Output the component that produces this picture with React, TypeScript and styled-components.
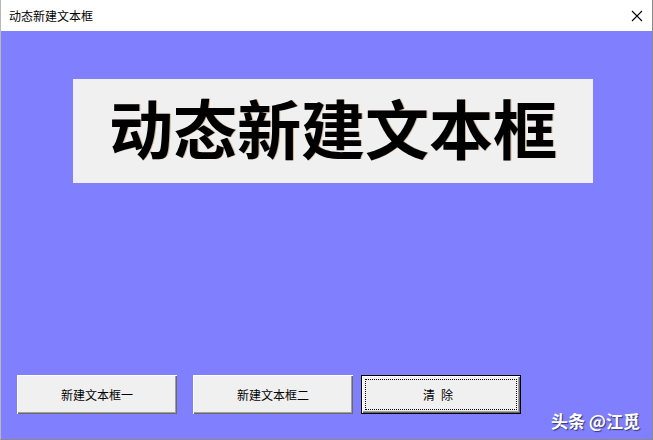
import React from "react";
import styled, { createGlobalStyle } from "styled-components";

const GlobalStyle = createGlobalStyle`
    html, body {
        margin: 0;
        padding: 0;
        background: #ffffff;
    }
    body {
        font-family: "Noto Sans CJK SC", "Liberation Sans", sans-serif;
    }
`;

const Window = styled.div`
    position: relative;
    width: 653px;
    height: 440px;
    box-sizing: border-box;
    display: flex;
    flex-direction: column;
    border-right: 1px solid #8a8a8a;
    border-bottom: 1px solid #8a8a8a;
    border-left: 1px solid #b8b8b8;
    overflow: hidden;
`;

const TitleBar = styled.div`
    height: 31px;
    flex: none;
    display: flex;
    align-items: center;
    justify-content: space-between;
    background: #ffffff;
    padding: 0 0 0 8px;
`;

const Title = styled.span`
    font-size: 12px;
    color: #000;
    line-height: 1;
`;

const CloseButton = styled.div`
    width: 30px;
    height: 31px;
    display: flex;
    align-items: center;
    justify-content: center;
`;

const Body = styled.div`
    flex: 1;
    background: #8080ff;
    display: flex;
    flex-direction: column;
    padding: 48px 0 0 0;
`;

const Banner = styled.div`
    margin-left: 72px;
    width: 520px;
    height: 104px;
    background: #f0f0f0;
    display: flex;
    align-items: center;
    justify-content: center;
`;

const BannerText = styled.span`
    font-size: 64px;
    font-weight: 700;
    color: #000;
    line-height: 1;
    margin-top: -10px;
    text-shadow: 1px 0 0 rgba(140, 70, 0, 0.35);
`;

const ButtonRow = styled.div`
    margin-top: auto;
    margin-bottom: 25px;
    padding-left: 16px;
    display: flex;
    gap: 8px;
`;

const Button = styled.button<{ $focused?: boolean; $gapAfter?: number }>`
    box-sizing: border-box;
    width: 160px;
    height: 39px;
    margin-right: ${(p) => p.$gapAfter ?? 0}px;
    background: #f0f0f0;
    font-family: "Noto Sans CJK SC", "Liberation Sans", sans-serif;
    font-size: 12px;
    color: #000;
    padding: 0;
    position: relative;
    border: ${(p) => (p.$focused ? "1px solid #000" : "none")};
    box-shadow: inset 1px 1px 0 #ffffff, inset -1px -1px 0 #696969, inset -2px -2px 0 #a0a0a0;
    letter-spacing: ${(p) => (p.$focused ? "6px" : "0")};
    outline: none;

    &::after {
        content: "";
        display: ${(p) => (p.$focused ? "block" : "none")};
        position: absolute;
        inset: 3px;
        border: 1px dotted #000;
    }
`;

const Watermark = styled.span`
    position: absolute;
    right: 12px;
    bottom: 10px;
    font-size: 17px;
    font-weight: 700;
    color: #ffffff;
    line-height: 1;
    text-shadow: 1px 1px 1px rgba(30, 30, 60, 0.75);
`;

const App = (): JSX.Element => {
    return (
        <>
            <GlobalStyle />
            <Window>
                <TitleBar>
                    <Title>动态新建文本框</Title>
                    <CloseButton>
                        <svg width="12" height="12" viewBox="0 0 12 12">
                            <path d="M1 1 L11 11 M11 1 L1 11" stroke="#000" strokeWidth="1.1" />
                        </svg>
                    </CloseButton>
                </TitleBar>
                <Body>
                    <Banner>
                        <BannerText>动态新建文本框</BannerText>
                    </Banner>
                    <ButtonRow>
                        <Button $gapAfter={8}>新建文本框一</Button>
                        <Button>新建文本框二</Button>
                        <Button $focused>清除</Button>
                    </ButtonRow>
                </Body>
                <Watermark>头条 @江觅</Watermark>
            </Window>
        </>
    );
};

export default App;
